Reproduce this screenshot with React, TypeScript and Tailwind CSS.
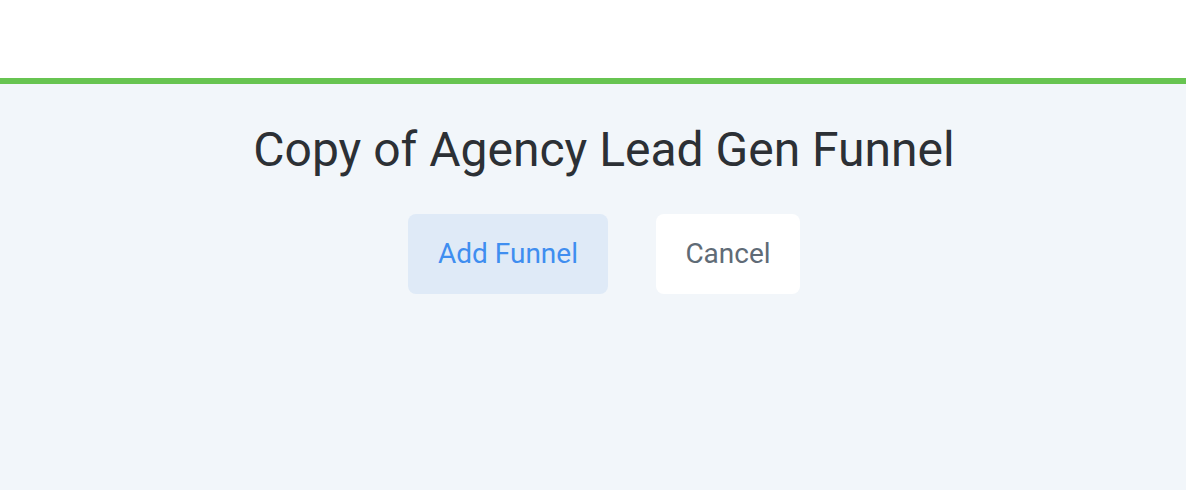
export default function App() {
  return (
    <div className="min-h-screen flex flex-col bg-[#f2f6fa] font-['Roboto',sans-serif]">
      <div className="h-[78px] bg-white" />
      <div className="h-[6px] bg-[#67c451]" />
      <div className="flex-1 flex flex-col items-center pl-[22px] pt-[38px]">
        <h1 className="text-[48px] leading-[56px] text-[#2c3035]">Copy of Agency Lead Gen Funnel</h1>
        <div className="mt-[36px] flex gap-[48px]">
          <button className="h-[80px] w-[200px] rounded-[8px] bg-[#dfeaf7] text-[28px] text-[#3f8ef0]">
            Add Funnel
          </button>
          <button className="h-[80px] w-[144px] rounded-[8px] bg-white text-[28px] text-[#5f6b76]">
            Cancel
          </button>
        </div>
      </div>
    </div>
  );
}
